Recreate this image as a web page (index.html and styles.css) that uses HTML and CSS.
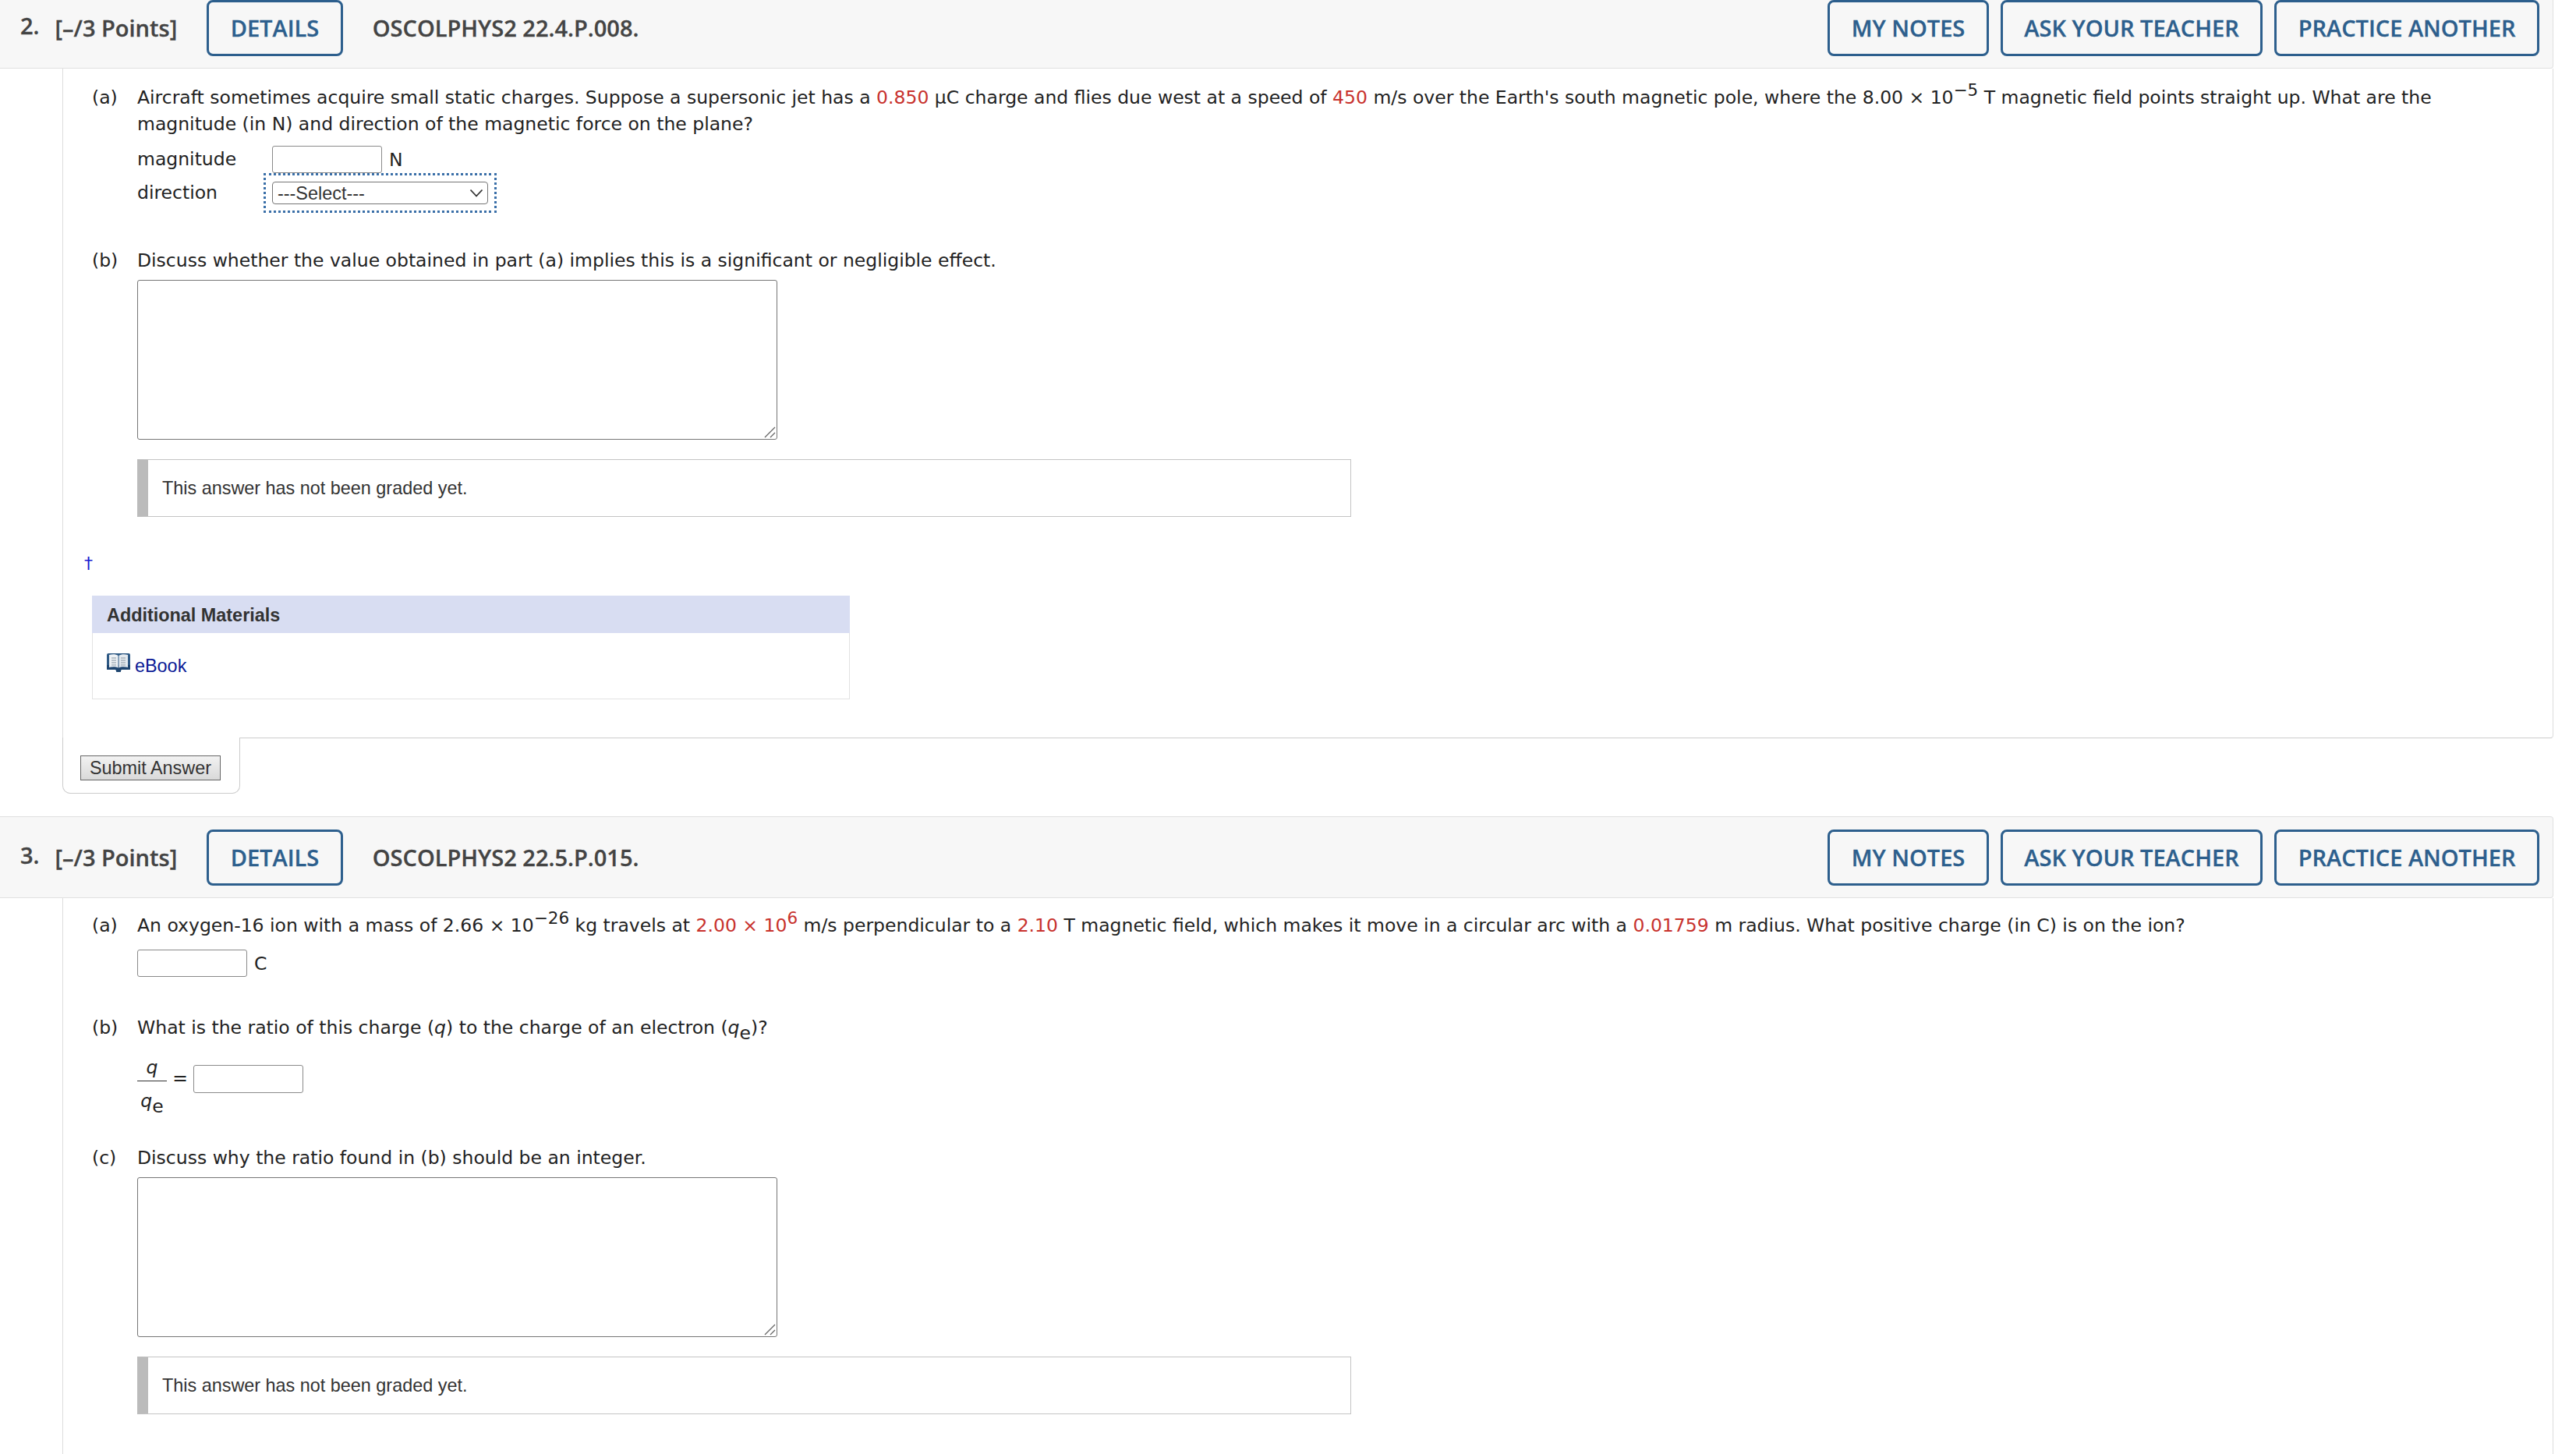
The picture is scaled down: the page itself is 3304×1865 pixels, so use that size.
FILE: index.html
```html
<!DOCTYPE html>
<html lang="en">
<head>
<meta charset="utf-8">
<title>Questions</title>
<link rel="stylesheet" href="styles.css">
</head>
<body>
<main class="page">
  <section class="question">
    <header class="qhead">
      <span class="qnum">2.</span>
      <span class="qpoints">[–/3 Points]</span>
      <button class="hbtn details">DETAILS</button>
      <span class="qtitle">OSCOLPHYS2 22.4.P.008.</span>
      <div class="hactions">
        <button class="hbtn">MY NOTES</button>
        <button class="hbtn">ASK YOUR TEACHER</button>
        <button class="hbtn">PRACTICE ANOTHER</button>
      </div>
    </header>
    <div class="qbody q-one">
      <div class="part first">
        <span class="plabel">(a)</span>
        <div class="pcontent">
          <p class="ptext">Aircraft sometimes acquire small static charges. Suppose a supersonic jet has a <span class="red">0.850</span> µC charge and flies due west at a speed of <span class="red">450</span> m/s over the Earth's south magnetic pole, where the 8.00 × 10<sup class="up">−5</sup> T magnetic field points straight up. What are the magnitude (in N) and direction of the magnetic force on the plane?</p>
          <div class="answers">
            <label class="alabel">magnitude</label>
            <div class="acell"><input class="num-input" type="text"><span class="unit">N</span></div>
            <label class="alabel">direction</label>
            <div class="acell">
              <div class="select-wrap">
                <select class="sel"><option>---Select---</option></select>
                <svg class="chev" width="18" height="11" viewBox="0 0 18 11"><path d="M1.500 1.500 9 9.500l7.500-8" fill="none" stroke="#333" stroke-width="1.800"/></svg>
              </div>
            </div>
          </div>
        </div>
      </div>
      <div class="part second">
        <span class="plabel">(b)</span>
        <div class="pcontent">
          <p class="ptext">Discuss whether the value obtained in part (a) implies this is a significant or negligible effect.</p>
          <div class="essay-wrap">
            <textarea class="essay"></textarea>
            <svg class="grip" width="15" height="15" viewBox="0 0 15 15"><path d="M1 14 14 1M8 14l6-6" stroke="#666" stroke-width="1.300" fill="none"/></svg>
          </div>
          <div class="note">This answer has not been graded yet.</div>
        </div>
      </div>
      <div class="dagger">†</div>
      <div class="materials">
        <div class="mat-head">Additional Materials</div>
        <div class="mat-body">
          <svg class="book" width="30" height="26" viewBox="0 0 30 26">
            <path d="M0 3q0-2 2-2h26q2 0 2 2v18q0 1-1 1H18.500l-1 3h-5l-1-3H1q-1 0-1-1z" fill="#2f5a85"/>
            <path d="M0 16h30v5q0 1-1 1H18.500l-1 3h-5l-1-3H1q-1 0-1-1z" fill="#1f4670"/>
            <path d="M3 3c4-1 9-1 11.500 1v15.500C12 18 7 18 3 19z" fill="#eef2f5"/>
            <path d="M27 3c-4-1-9-1-11.500 1v15.500c2.500-1.500 7.500-1.500 11.500-.5z" fill="#e4eaef"/>
            <path d="M6 7h6M6 10h6M6 13h6M6 16h6M18 7h6M18 10h6M18 13h6M18 16h6" stroke="#a9b4bd" stroke-width="1.300"/>
          </svg>
          <a class="ebook" href="#">eBook</a>
        </div>
      </div>
    </div>
    <div class="submit-tab"><button class="submit">Submit Answer</button></div>
  </section>

  <section class="question">
    <header class="qhead">
      <span class="qnum">3.</span>
      <span class="qpoints">[–/3 Points]</span>
      <button class="hbtn details">DETAILS</button>
      <span class="qtitle">OSCOLPHYS2 22.5.P.015.</span>
      <div class="hactions">
        <button class="hbtn">MY NOTES</button>
        <button class="hbtn">ASK YOUR TEACHER</button>
        <button class="hbtn">PRACTICE ANOTHER</button>
      </div>
    </header>
    <div class="qbody open">
      <div class="part first">
        <span class="plabel">(a)</span>
        <div class="pcontent">
          <p class="ptext">An oxygen-16 ion with a mass of 2.66 × 10<sup class="up">−26</sup> kg travels at <span class="red">2.00 × 10<sup class="up">6</sup></span> m/s perpendicular to a <span class="red">2.10</span> T magnetic field, which makes it move in a circular arc with a <span class="red">0.01759</span> m radius. What positive charge (in C) is on the ion?</p>
          <div class="acell unit-row"><input class="num-input" type="text"><span class="unit">C</span></div>
        </div>
      </div>
      <div class="part gap-b">
        <span class="plabel">(b)</span>
        <div class="pcontent">
          <p class="ptext">What is the ratio of this charge (<i>q</i>) to the charge of an electron (<i>q</i><sub class="down">e</sub>)?</p>
          <div class="ratio">
            <span class="frac"><span class="fnum"><i>q</i></span><span class="fden"><i>q</i><sub class="down">e</sub></span></span>
            <span class="eq">=</span>
            <input class="num-input" type="text">
          </div>
        </div>
      </div>
      <div class="part gap-c">
        <span class="plabel">(c)</span>
        <div class="pcontent">
          <p class="ptext">Discuss why the ratio found in (b) should be an integer.</p>
          <div class="essay-wrap">
            <textarea class="essay"></textarea>
            <svg class="grip" width="15" height="15" viewBox="0 0 15 15"><path d="M1 14 14 1M8 14l6-6" stroke="#666" stroke-width="1.300" fill="none"/></svg>
          </div>
          <div class="note">This answer has not been graded yet.</div>
        </div>
      </div>
    </div>
  </section>
</main>
</body>
</html>
```

FILE: styles.css
```css
* { box-sizing: border-box; }
html, body { margin: 0; padding: 0; background: #fff; height: 100%; overflow: hidden; }
.page { margin-top: -17px; width: 3275px; font-family: "DejaVu Sans", Verdana, sans-serif; font-size: 23.5px; color: #222; }

.question { margin-bottom: 29px; }
.qhead {
  height: 105px; display: flex; align-items: center; padding: 0 17px 0 26px;
  background: #f7f7f7; border: 1px solid #e0e0e0; border-left: 0; border-radius: 0 4px 4px 0;
  font-family: "Open Sans", sans-serif; font-weight: 600; font-size: 29px; color: #444;
  -webkit-text-stroke: 0.3px currentColor;
}
.qnum { margin-right: 20px; margin-bottom: 6px; }
.qpoints { margin-right: 38px; }
.qtitle { margin-left: 38px; }
.hactions { margin-left: auto; display: flex; gap: 15px; }
.hbtn {
  height: 72px; padding: 0 27.5px; background: #f7f7f7; border: 3px solid #2d5f8d; border-radius: 8px;
  font-family: "Open Sans", sans-serif; font-weight: 600; font-size: 29px; color: #2d5f8d;
  -webkit-text-stroke: 0.3px currentColor;
}

.qbody {
  margin-left: 80px; padding: 0 40px 49px 37px;
  border-left: 1px solid #ddd; border-right: 1px solid #ddd; border-bottom: 1px solid #ccc; border-radius: 0 0 4px 0;
}
.qbody.open { border-bottom: 0; height: 760px; padding-bottom: 0; }

.part { display: grid; grid-template-columns: 58px 1fr; line-height: 34px; }
.part.first { padding-top: 18px; }
.q-one .part.first { padding-top: 20px; }
.part.second { margin-top: 52px; }
.part.gap-b { margin-top: 48px; }
.part.gap-c { margin-top: 38px; }
.ptext { margin: 0; line-height: 34px; }
.red { color: #c8322d; }
.up { font-size: 21.5px; line-height: 0; vertical-align: 10px; }
.down { font-size: 23.5px; line-height: 0; vertical-align: -7px; }

.answers { display: grid; grid-template-columns: 173px 1fr; align-items: center; margin-top: 11px; row-gap: 8px; }
.alabel { line-height: 35px; }
.acell { display: flex; align-items: center; height: 35px; }
.answers .acell:last-child { height: 29px; }
.unit { margin-left: 9px; }
.unit-row { margin-top: 14px; }
.num-input { width: 141px; height: 35px; border: 1px solid #8a8a8a; border-radius: 3px; background: #fff; padding: 0; }

.select-wrap { width: 277px; height: 29px; display: flex; position: relative; outline: 3px dotted #3a6fa8; outline-offset: 8px; }
.sel {
  appearance: none; width: 100%; height: 100%; padding: 0 6px; border: 1px solid #767676; border-radius: 4px; background: #fff;
  font-family: "Liberation Sans", sans-serif; font-size: 23.4px; color: #333;
}
.chev { position: absolute; right: 6px; top: 9px; }

.essay-wrap { position: relative; width: 821px; height: 205px; margin-top: 8px; }
.essay { display: block; width: 100%; height: 100%; resize: none; border: 1px solid #767676; border-radius: 3px; background: #fff; }
.grip { position: absolute; right: 2px; bottom: 2px; pointer-events: none; }
.note {
  width: 1557px; height: 74px; margin-top: 25px; display: flex; align-items: center; padding-left: 18px;
  border: 1px solid #c4c4c4; border-left: 14px solid #bbb;
  font-family: "Liberation Sans", sans-serif; font-size: 23.4px; color: #333;
}

.dagger { margin-top: 43px; margin-left: -10px; line-height: 34px; color: #1a1ad0; font-size: 22px; }
.materials { width: 972px; margin-top: 24px; border: 1px solid #e2e2e2; border-top: 0; font-family: "Liberation Sans", sans-serif; font-size: 23.4px; }
.mat-head { height: 48px; margin-left: -1px; margin-right: -1px; padding: 2px 0 0 19px; display: flex; align-items: center; background: #d8ddf2; font-weight: 700; color: #333; }
.mat-body { height: 84px; padding: 25px 0 0 18px; display: flex; align-items: flex-start; gap: 6px; }
.book { flex: none; }
.ebook { color: #0a1a96; text-decoration: none; line-height: 32px; margin-top: 1px; }

.submit-tab {
  width: 228px; height: 72px; margin: -1px 0 0 80px; padding: 23px 0 0 22px; background: #fff;
  border: 1px solid #ccc; border-top: 0; border-radius: 0 0 10px 10px; display: flex; align-items: flex-start;
}
.submit {
  width: 180px; height: 32px; padding: 0; border: 1px solid #666; background: linear-gradient(#f2f2f2, #d9d9d9);
  font-family: "Liberation Sans", sans-serif; font-size: 23.4px; color: #333;
}

.ratio { display: flex; align-items: flex-start; margin-top: 21px; }
.frac { width: 38px; height: 74px; display: flex; flex-direction: column; align-items: center; }
.fnum { width: 100%; height: 31px; line-height: 26px; text-align: center; border-bottom: 1px solid #333; }
.fden { height: 43px; line-height: 30px; padding-top: 10px; }
.eq { width: 34px; text-align: center; margin-top: 10px; line-height: 35px; }
.ratio .num-input { margin-top: 10px; height: 36px; }
```
